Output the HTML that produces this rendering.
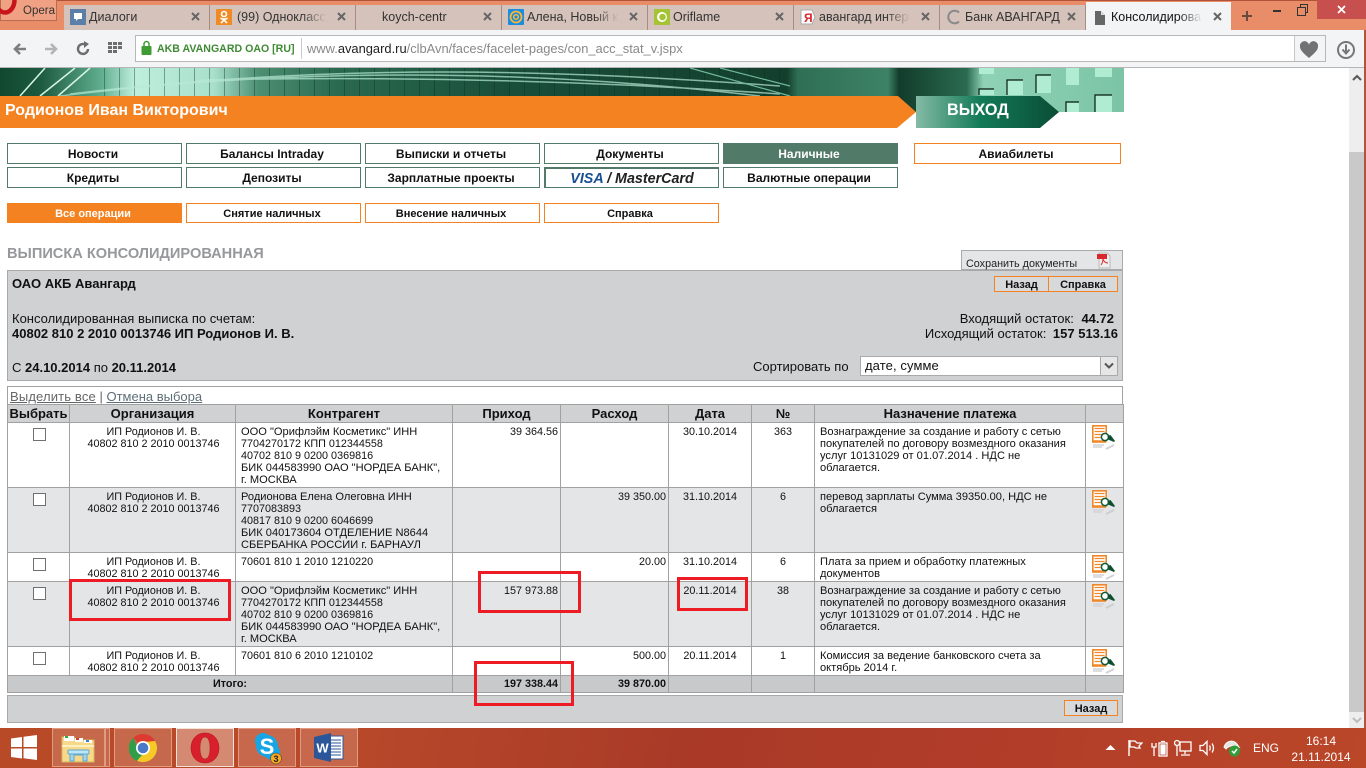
<!DOCTYPE html>
<html lang="ru"><head><meta charset="utf-8"><title>Консолидированная выписка</title>
<style>
html,body{margin:0;padding:0;width:1366px;height:768px;overflow:hidden;background:#fff;font-family:"Liberation Sans",Arial,sans-serif;color:#111}
.a{position:absolute;white-space:nowrap}
.tab{position:absolute;top:5px;height:25px;width:146px;background:#d5c2ba;border-right:1px solid #a98d82;box-sizing:border-box;font-size:12.5px;line-height:24px;color:#333;overflow:hidden}
.tab span.t{position:absolute;left:25px;top:0;white-space:nowrap}
.tab svg.fav{position:absolute;left:6px;top:4px}
.tab i{position:absolute;left:126px;top:6px;width:11px;height:11px;font-style:normal}
.tab i svg{display:block}
.fade{position:absolute;left:92px;top:0;width:54px;height:25px;background:linear-gradient(90deg,rgba(213,194,186,0),#d5c2ba 45%)}
.nav{position:absolute;box-sizing:border-box;width:175px;height:21px;border:1px solid #527a69;background:#fff;text-align:center;font-weight:bold;font-size:12px;line-height:21px;color:#111;padding-right:3px}
.nav.o{border-color:#f58220}
.sub{position:absolute;box-sizing:border-box;width:175px;height:20px;top:203px;border:1px solid #f58220;background:#fff;text-align:center;font-weight:bold;font-size:11px;line-height:20px;color:#111;padding-right:3px}
table{position:absolute;left:7px;top:404px;width:1116px;border-collapse:collapse;table-layout:fixed;font-size:10.8px;line-height:12px}
td,th{border:1px solid #a0a1a0;padding:3px 5px 0;vertical-align:top;box-sizing:border-box;overflow:hidden}
th{background:#d0d1d3;font-size:13px;line-height:15px;text-align:center;padding:0;vertical-align:middle;font-weight:bold}
tr.g td{background:#e4e5e7}
tr.w td{background:#fff}
tr.s td{background:#c8c9cb;font-weight:bold;padding-top:2px}
.c{text-align:center}.r{text-align:right;padding-right:2px}
td.r{padding-right:2px}
td.n{font-size:11.1px}
.l{font-size:11.1px}
.org{position:relative;left:1px;display:block}
.cb{display:block;width:13px;height:13px;border:1px solid #707070;background:#fff;box-sizing:border-box;margin:2px auto 0;position:relative;left:1px}
.ic{display:block;margin:0 0 0 1px}
td.i{padding:1px 0 0 5px}
.btn{position:absolute;box-sizing:border-box;border:1px solid #f58220;background:#d8d9da;text-align:center;font-weight:bold;font-size:11px;line-height:16px;color:#111}
.red{position:absolute;box-sizing:border-box;border:3px solid #ed1c24}
.tb{position:absolute;top:728px;height:39px;box-sizing:border-box;border:1px solid rgba(255,220,200,.45);background:rgba(255,230,215,.2)}
</style></head><body>

<!-- browser title / tab strip -->
<div class="a" style="left:0;top:0;width:1366px;height:30px;background:#e98c68"></div>
<div class="a" style="left:0;top:0;width:1366px;height:1px;background:#b0533a"></div>
<div class="a" style="left:0;top:0;width:57px;height:21px;background:#f0a184;border:1px solid #b96a4f;border-top:0;box-sizing:border-box"></div>
<svg class="a" style="left:0;top:0" width="20" height="17"><ellipse cx="5" cy="0" rx="9.500" ry="12.500" fill="none" stroke="#c8141c" stroke-width="4.500"/></svg>
<div class="a" style="left:23px;top:4px;font-size:11.500px;line-height:15px;color:#333">Opera</div>

<div class="tab" style="left:64px"><svg class="fav" width="16" height="16"><rect width="16" height="16" fill="#5b7fa8"/><path d="M4 4h8v6H8l-2 2v-2H4z" fill="#fff"/></svg><span class="t">Диалоги</span><i><svg width="11" height="11"><path d="M2 2l7 7M9 2l-7 7" stroke="#666" stroke-width="2"/></svg></i></div>
<div class="tab" style="left:210px"><svg class="fav" width="16" height="16"><rect width="16" height="16" rx="1" fill="#f08a24"/><circle cx="8" cy="5" r="2.500" fill="none" stroke="#fff" stroke-width="1.600"/><path d="M4.500 9.200q3.500 2 7 0M8 10.500v1M5 14l3-3 3 3" fill="none" stroke="#fff" stroke-width="1.600"/></svg><span class="t" style="left:27px">(99) Одноклассники</span><div class="fade"></div><i><svg width="11" height="11"><path d="M2 2l7 7M9 2l-7 7" stroke="#666" stroke-width="2"/></svg></i></div>
<div class="tab" style="left:356px"><span class="t" style="left:26px">koych-centr</span><i><svg width="11" height="11"><path d="M2 2l7 7M9 2l-7 7" stroke="#666" stroke-width="2"/></svg></i></div>
<div class="tab" style="left:502px"><svg class="fav" width="16" height="16"><rect width="16" height="16" rx="1" fill="#168de2"/><circle cx="8" cy="8" r="5.500" fill="none" stroke="#ffb52e" stroke-width="1.800"/><circle cx="8" cy="8" r="2.300" fill="none" stroke="#ffb52e" stroke-width="1.500"/></svg><span class="t">Алена, Новый кошелек</span><div class="fade"></div><i><svg width="11" height="11"><path d="M2 2l7 7M9 2l-7 7" stroke="#666" stroke-width="2"/></svg></i></div>
<div class="tab" style="left:648px"><svg class="fav" width="16" height="16"><rect width="16" height="16" fill="#a4c433"/><circle cx="8" cy="8" r="5" fill="#fff"/><circle cx="8.500" cy="8" r="3.300" fill="#a4c433"/></svg><span class="t">Oriflame</span><i><svg width="11" height="11"><path d="M2 2l7 7M9 2l-7 7" stroke="#666" stroke-width="2"/></svg></i></div>
<div class="tab" style="left:794px"><svg class="fav" width="16" height="16"><path d="M1 1h11l3 7-3 7H1z" fill="#fff" stroke="#aaa"/><text x="4" y="13" font-size="12" font-family="Liberation Sans" font-weight="bold" fill="#d8262c">Я</text></svg><span class="t">авангард интернет</span><div class="fade"></div><i><svg width="11" height="11"><path d="M2 2l7 7M9 2l-7 7" stroke="#666" stroke-width="2"/></svg></i></div>
<div class="tab" style="left:940px"><svg class="fav" width="16" height="16"><path d="M13 3.500A6.300 6.300 0 1 0 13 12.500" fill="none" stroke="#8a8a8a" stroke-width="2"/></svg><span class="t">Банк АВАНГАРД</span><i><svg width="11" height="11"><path d="M2 2l7 7M9 2l-7 7" stroke="#666" stroke-width="2"/></svg></i></div>
<div class="tab" style="left:1086px;width:145px;top:2px;height:29px;background:#f3f4f6;border:0;line-height:30px;color:#111"><svg class="fav" style="top:8px" width="16" height="16"><path d="M3 1h6l4 4v10H3z" fill="#666"/><path d="M9 1v4h4" fill="#ddd"/></svg><span class="t">Консолидированная</span><div class="fade" style="height:29px;background:linear-gradient(90deg,rgba(243,244,246,0),#f3f4f6 45%)"></div><i style="top:9px"><svg width="11" height="11"><path d="M2 2l7 7M9 2l-7 7" stroke="#666" stroke-width="2"/></svg></i></div>

<svg class="a" style="left:1240px;top:9px" width="14" height="14"><path d="M7 2v10M2 7h10" stroke="#6a4a3c" stroke-width="2"/></svg>
<div class="a" style="left:1273px;top:10px;width:8px;height:2px;background:#333"></div>
<svg class="a" style="left:1297px;top:4px" width="12" height="12"><path d="M3.500 3.500v-3h7v8h-2M.5 3.500h8v8h-8z" fill="none" stroke="#333"/></svg>
<div class="a" style="left:1317px;top:0;width:49px;height:19px;background:#c7504f"></div>
<svg class="a" style="left:1336px;top:4px" width="11" height="11"><path d="M2 2l7 7M9 2l-7 7" stroke="#fff" stroke-width="1.800"/></svg>

<!-- toolbar -->
<div class="a" style="left:0;top:30px;width:1366px;height:38px;background:#f3f4f6;border-bottom:1px solid #b5b5b5;box-sizing:border-box"></div>
<svg class="a" style="left:12px;top:41px" width="16" height="16"><path d="M14 8H4M8 3L3 8l5 5" fill="none" stroke="#7d7d7d" stroke-width="2.600"/></svg>
<svg class="a" style="left:43px;top:41px" width="16" height="16"><path d="M2 8h10M8 3l5 5-5 5" fill="none" stroke="#b4b4b4" stroke-width="2.600"/></svg>
<svg class="a" style="left:75px;top:41px" width="16" height="16"><path d="M13 8A5 5 0 1 1 10.500 3.600" fill="none" stroke="#6d6d6d" stroke-width="2.400"/><path d="M9 0l5 3-5 4z" fill="#6d6d6d"/></svg>
<svg class="a" style="left:108px;top:41px" width="15" height="15" fill="#6d6d6d"><rect x="0" y="1" width="4" height="3"/><rect x="5" y="1" width="4" height="3"/><rect x="10" y="1" width="4" height="3"/><rect x="0" y="5" width="4" height="3"/><rect x="5" y="5" width="4" height="3"/><rect x="10" y="5" width="4" height="3"/><rect x="0" y="9" width="4" height="3"/><rect x="5" y="9" width="4" height="3"/></svg>
<div class="a" style="left:135px;top:35px;width:1191px;height:27px;background:#fff;border:1px solid #b8b8b8;box-sizing:border-box"></div>
<div class="a" style="left:1294px;top:36px;width:31px;height:25px;background:#f3f4f6;border-left:1px solid #c8c8c8;box-sizing:border-box"></div>
<svg class="a" style="left:141px;top:40px" width="11" height="16"><rect x="0.500" y="6" width="10" height="9" rx="1" fill="#3f9b33"/><path d="M3 6V4a2.500 2.500 0 0 1 5 0v2" fill="none" stroke="#3f9b33" stroke-width="1.500"/></svg>
<div class="a" style="left:157px;top:42px;font-size:10.600px;line-height:15px;font-weight:bold;color:#3f8a34">AKB AVANGARD OAO [RU]</div>
<div class="a" style="left:301px;top:38px;width:1px;height:21px;background:#ccc"></div>
<div class="a" style="left:307px;top:41px;font-size:12.900px;line-height:16px;color:#888">www.<span style="color:#222">avangard.ru</span>/clbAvn/faces/facelet-pages/con_acc_stat_v.jspx</div>
<svg class="a" style="left:1299px;top:41px" width="20" height="18"><path d="M10 17C3 11 1 8.500 1 5.500A4.500 4.500 0 0 1 10 4a4.500 4.500 0 0 1 9 1.500C19 8.500 17 11 10 17z" fill="#727272"/></svg>
<svg class="a" style="left:1336px;top:40px" width="20" height="20"><circle cx="10" cy="10" r="8" fill="none" stroke="#777" stroke-width="2"/><path d="M10 4.500v8M6.500 9.500l3.500 4 3.500-4" fill="none" stroke="#777" stroke-width="2"/></svg>

<!-- header art -->
<svg class="a" style="left:0;top:68px" width="1124" height="44" viewBox="0 0 1124 44">
<defs>
<linearGradient id="hg" x1="0" x2="1" y1="0" y2="0">
<stop offset="0" stop-color="#10472f"/><stop offset=".036" stop-color="#1d5a40"/><stop offset=".09" stop-color="#5fae8e"/><stop offset=".12" stop-color="#bfeedd"/><stop offset=".19" stop-color="#a8e0cc"/><stop offset=".23" stop-color="#4d8f73"/><stop offset=".3" stop-color="#2a6a50"/><stop offset=".45" stop-color="#194f3a"/><stop offset=".7" stop-color="#133f2d"/><stop offset=".71" stop-color="#2f6f55"/><stop offset=".79" stop-color="#3d8266"/><stop offset=".8" stop-color="#123c2b"/><stop offset=".86" stop-color="#2a6b50"/><stop offset=".875" stop-color="#8fd2b6"/><stop offset="1" stop-color="#7cc4a6"/>
</linearGradient>
<pattern id="win" width="15" height="44" patternUnits="userSpaceOnUse"><rect x="14" width="1" height="44" fill="#0a2c1e" opacity=".4"/></pattern>
</defs>
<rect width="1124" height="44" fill="url(#hg)"/>
<rect x="100" width="690" height="28" fill="url(#win)"/>
<path d="M60 28Q400-14 760 28M70 26C340-6 560 2 780 18M200 12Q500 6 780 26" fill="none" stroke="#b8ead6" stroke-width="1.500" opacity=".7"/>
<path d="M40 28L75 0M58 28L90 0M20 28L45 0" stroke="#d6f5e8" stroke-width="1.500" fill="none"/>
<path d="M690 0l100 28M720 0l70 18" stroke="#6fb89b" stroke-width="1.200" fill="none"/>
<g fill="#b0ecd2"><rect x="979" y="0" width="15" height="6"/><rect x="979" y="21" width="15" height="6"/><rect x="1007" y="12" width="16" height="15"/><rect x="1036" y="7" width="15" height="18"/><rect x="1066" y="0" width="13" height="17"/><rect x="1095" y="0" width="17" height="9"/><rect x="1095" y="27" width="17" height="17"/><rect x="1066" y="34" width="13" height="10"/></g>
<path d="M979 27v-6h15M1007 27V12h16M1036 25V7h15M1095 44V27h17M1066 44V34h13" fill="none" stroke="#071a10" stroke-width="1.200"/>
</svg>
<svg class="a" style="left:0;top:96px" width="1124" height="32">
<defs><linearGradient id="ex" x1="0" x2="1" y1="0" y2="0"><stop offset="0" stop-color="#84bba5"/><stop offset=".45" stop-color="#137a58"/><stop offset="1" stop-color="#0a4d36"/></linearGradient></defs>
<path d="M895 32L916 16V32zM1040 32L1059 16L1070 16L1124 16V32z" fill="#fff"/>
<path d="M0 0H898L916 16L897 32H0z" fill="#f58220"/>
<path d="M916 0H1040L1059 16L1040 32H916z" fill="url(#ex)"/>
</svg>
<div class="a" style="left:5px;top:102px;font-size:16px;line-height:18px;font-weight:bold;color:#fff">Родионов Иван Викторович</div>
<div class="a" style="left:947px;top:100px;font-size:16.200px;line-height:21px;font-weight:bold;color:#fff">ВЫХОД</div>

<!-- nav -->
<div class="nav" style="left:7px;top:143px">Новости</div>
<div class="nav" style="left:186px;top:143px">Балансы Intraday</div>
<div class="nav" style="left:365px;top:143px">Выписки и отчеты</div>
<div class="nav" style="left:544px;top:143px">Документы</div>
<div class="nav" style="left:723px;top:143px;background:#527a69;color:#fff">Наличные</div>
<div class="nav o" style="left:914px;top:143px;width:207px">Авиабилеты</div>
<div class="nav" style="left:7px;top:167px">Кредиты</div>
<div class="nav" style="left:186px;top:167px">Депозиты</div>
<div class="nav" style="left:365px;top:167px">Зарплатные проекты</div>
<div class="nav" style="left:544px;top:167px;font-style:italic;font-size:14.300px;border-width:2px 1px 1px 2px;line-height:20px;color:#222;padding-right:0"><span style="color:#1a4f8f">VISA</span> / MasterCard</div>
<div class="nav" style="left:723px;top:167px">Валютные операции</div>

<div class="sub" style="left:7px;background:#f58220;color:#fff">Все операции</div>
<div class="sub" style="left:186px">Снятие наличных</div>
<div class="sub" style="left:365px">Внесение наличных</div>
<div class="sub" style="left:544px">Справка</div>

<div class="a" style="left:7px;top:246px;font-size:14.600px;line-height:16px;font-weight:bold;color:#97989b">ВЫПИСКА КОНСОЛИДИРОВАННАЯ</div>

<!-- save -->
<div class="a" style="left:961px;top:250px;width:162px;height:20px;background:#e4e5e6;border:1px solid #aaa;box-sizing:border-box"></div>
<div class="a" style="left:966px;top:258px;font-size:10.800px;line-height:13px;color:#222">Сохранить документы</div>
<svg class="a" style="left:1097px;top:252px" width="15" height="17"><path d="M2 1h8l3 3v12H2z" fill="#eee" stroke="#bbb"/><rect x="0" y="2" width="10" height="5" fill="#d8282c"/><path d="M4 13c2-3 2-5 2-6 1 3 3 4 5 4" fill="none" stroke="#d8282c"/></svg>

<!-- info panel -->
<div class="a" style="left:7px;top:270px;width:1116px;height:111px;background:#d0d1d3;border:1px solid #a8a9aa;box-sizing:border-box"></div>
<div class="a" style="left:12px;top:276px;font-size:13px;line-height:15px;font-weight:bold">ОАО АКБ Авангард</div>
<div class="a" style="left:12px;top:311px;font-size:13px;line-height:15px">Консолидированная выписка по счетам:</div>
<div class="a" style="left:12px;top:326px;font-size:13px;line-height:15px;font-weight:bold">40802 810 2 2010 0013746 ИП Родионов И. В.</div>
<div class="a" style="left:12px;top:360px;font-size:13px;line-height:15px">С <b>24.10.2014</b> по <b>20.11.2014</b></div>
<div class="btn" style="left:994px;top:276px;width:55px;height:16px">Назад</div>
<div class="btn" style="left:1048px;top:276px;width:70px;height:16px">Справка</div>
<div class="a" style="right:252px;top:311px;font-size:13px;line-height:15px">Входящий остаток:&nbsp;<b style="margin-left:4px">44.72</b></div>
<div class="a" style="right:248px;top:326px;font-size:13px;line-height:15px">Исходящий остаток:&nbsp;<b style="margin-left:3px">157 513.16</b></div>
<div class="a" style="left:753px;top:359px;font-size:13px;line-height:15px">Сортировать по</div>
<div class="a" style="left:860px;top:356px;width:258px;height:20px;background:#fff;border:1px solid #aaa;box-sizing:border-box;font-size:13px;line-height:18px;padding-left:4px;letter-spacing:.1px">дате, сумме</div>
<div class="a" style="left:1100px;top:357px;width:17px;height:18px;background:#e6e6e6;border-left:1px solid #aaa;box-sizing:border-box"></div>
<svg class="a" style="left:1104px;top:362px" width="10" height="8"><path d="M1 1.500l4 4 4-4" fill="none" stroke="#555" stroke-width="2"/></svg>

<!-- link row -->
<div class="a" style="left:7px;top:386px;width:1116px;height:19px;border:1px solid #a0a1a0;box-sizing:border-box;background:#fff"></div>
<div class="a" style="left:10px;top:389px;font-size:13px;line-height:15px;color:#666"><span style="text-decoration:underline;letter-spacing:.15px">Выделить все</span> | <span style="text-decoration:underline;color:#5e6f76">Отмена выбора</span></div>

<svg width="0" height="0" style="position:absolute"><defs>
<symbol id="doc" viewBox="0 0 24 26">
<path d="M.8 1.800h13.400v15.200H.8z" fill="#fff" stroke="#f0882a" stroke-width="1.600"/>
<path d="M2.500 4.500h10M2.500 7.500h10M2.500 10.500h8M2.500 13.500h6" stroke="#f0882a" stroke-width="1.300"/>
<path d="M0 18h14" stroke="#f0882a" stroke-width="1.600"/>
<path d="M1 21h11M1 23h9" stroke="#d6d6da" stroke-width="2" opacity=".8"/>
<path d="M14 25l8-4" stroke="#c8c8cc" stroke-width="2" opacity=".8"/>
<circle cx="13" cy="13" r="3.600" fill="#fff" stroke="#0f5c3a" stroke-width="1.500"/>
<path d="M15.500 12l3-1 4.500 6-1 1-6-2.500z" fill="#0f4f30"/>
</symbol></defs></svg>

<table>
<colgroup><col style="width:62px"><col style="width:166px"><col style="width:217px"><col style="width:108px"><col style="width:108px"><col style="width:83px"><col style="width:63px"><col style="width:271px"><col style="width:38px"></colgroup>
<tr style="height:18px"><th>Выбрать</th><th>Организация</th><th>Контрагент</th><th>Приход</th><th>Расход</th><th>Дата</th><th>№</th><th>Назначение платежа</th><th></th></tr>
<tr class="w" style="height:65px"><td><span class="cb"></span></td><td class="c"><span class="org">ИП Родионов И. В.<br>40802 810 2 2010 0013746</span></td><td><span class="l">ООО "Орифлэйм Косметикс" ИНН</span><br>7704270172 КПП 012344558<br>40702 810 9 0200 0369816<br><span class="l">БИК 044583990 ОАО "НОРДЕА БАНК",</span><br><span class="l">г. МОСКВА</span></td><td class="r">39 364.56</td><td class="r"></td><td class="c">30.10.2014</td><td class="c">363</td><td class="n">Вознаграждение за создание и работу с сетью<br>покупателей по договору возмездного оказания<br>услуг 10131029 от 01.07.2014 . НДС не<br>облагается.</td><td class="i"><svg class="ic" width="24" height="26"><use href="#doc"/></svg></td></tr>
<tr class="g" style="height:65px"><td><span class="cb"></span></td><td class="c"><span class="org">ИП Родионов И. В.<br>40802 810 2 2010 0013746</span></td><td><span class="l">Родионова Елена Олеговна ИНН</span><br>7707083893<br>40817 810 9 0200 6046699<br><span class="l">БИК 040173604 ОТДЕЛЕНИЕ N8644</span><br><span class="l">СБЕРБАНКА РОССИИ г. БАРНАУЛ</span></td><td class="r"></td><td class="r">39 350.00</td><td class="c">31.10.2014</td><td class="c">6</td><td class="n">перевод зарплаты Сумма 39350.00, НДС не<br>облагается</td><td class="i"><svg class="ic" width="24" height="26"><use href="#doc"/></svg></td></tr>
<tr class="w" style="height:29px"><td><span class="cb"></span></td><td class="c"><span class="org">ИП Родионов И. В.<br>40802 810 2 2010 0013746</span></td><td>70601 810 1 2010 1210220</td><td class="r"></td><td class="r">20.00</td><td class="c">31.10.2014</td><td class="c">6</td><td class="n">Плата за прием и обработку платежных<br>документов</td><td class="i"><svg class="ic" width="24" height="26"><use href="#doc"/></svg></td></tr>
<tr class="g" style="height:65px"><td><span class="cb"></span></td><td class="c"><span class="org">ИП Родионов И. В.<br>40802 810 2 2010 0013746</span></td><td><span class="l">ООО "Орифлэйм Косметикс" ИНН</span><br>7704270172 КПП 012344558<br>40702 810 9 0200 0369816<br><span class="l">БИК 044583990 ОАО "НОРДЕА БАНК",</span><br><span class="l">г. МОСКВА</span></td><td class="r">157 973.88</td><td class="r"></td><td class="c">20.11.2014</td><td class="c">38</td><td class="n">Вознаграждение за создание и работу с сетью<br>покупателей по договору возмездного оказания<br>услуг 10131029 от 01.07.2014 . НДС не<br>облагается.</td><td class="i"><svg class="ic" width="24" height="26"><use href="#doc"/></svg></td></tr>
<tr class="w" style="height:29px"><td><span class="cb"></span></td><td class="c"><span class="org">ИП Родионов И. В.<br>40802 810 2 2010 0013746</span></td><td>70601 810 6 2010 1210102</td><td class="r"></td><td class="r">500.00</td><td class="c">20.11.2014</td><td class="c">1</td><td class="n">Комиссия за ведение банковского счета за<br>октябрь 2014 г.</td><td class="i"><svg class="ic" width="24" height="26"><use href="#doc"/></svg></td></tr>
<tr class="s" style="height:17px"><td colspan="3" class="c">Итого:</td><td class="r">197 338.44</td><td class="r">39 870.00</td><td></td><td></td><td></td><td></td></tr>
</table>

<!-- footer panel -->
<div class="a" style="left:7px;top:695px;width:1116px;height:28px;background:#d0d1d3;border:1px solid #a8a9aa;box-sizing:border-box"></div>
<div class="btn" style="left:1064px;top:700px;width:54px;height:16px">Назад</div>

<!-- red annotation boxes -->
<div class="red" style="left:69px;top:579px;width:162px;height:42px"></div>
<div class="red" style="left:478px;top:571px;width:103px;height:42px"></div>
<div class="red" style="left:474px;top:661px;width:100px;height:45px"></div>
<div class="red" style="left:677px;top:577px;width:71px;height:34px"></div>

<!-- scrollbar -->
<div class="a" style="left:1349px;top:68px;width:15px;height:660px;background:#eeeeee"></div>
<div class="a" style="left:1349px;top:152px;width:15px;height:560px;background:#c9c9c9"></div>
<svg class="a" style="left:1352px;top:74px" width="10" height="8"><path d="M1 6l4-4 4 4" fill="none" stroke="#555" stroke-width="2"/></svg>
<svg class="a" style="left:1352px;top:716px" width="10" height="8"><path d="M1 2l4 4 4-4" fill="none" stroke="#bbb" stroke-width="2"/></svg>
<div class="a" style="left:1364px;top:30px;width:2px;height:698px;background:#b0553a"></div>

<!-- taskbar -->
<div class="a" style="left:0;top:728px;width:1366px;height:40px;background:linear-gradient(100deg,#b84a28 0%,#b9492a 25%,#a93a27 50%,#b03c29 70%,#bb4729 100%)"></div>
<svg class="a" style="left:10px;top:734px" width="28" height="27" fill="#fff"><path d="M1 4.500l11-1.500v10H1zM13.500 2.800L27 1v12H13.500zM1 14.500h11v10L1 23zM13.500 14.500H27V26l-13.500-1.800z"/></svg>
<div class="tb" style="left:52px;width:53px"></div><div class="tb" style="left:105px;width:5px"></div>
<div class="tb" style="left:114px;width:58px"></div>
<div class="tb" style="left:176px;width:58px;background:rgba(255,235,225,.4);border:1px solid #f2e2da"></div>
<div class="tb" style="left:238px;width:58px"></div>
<div class="tb" style="left:300px;width:58px"></div>
<svg class="a" style="left:60px;top:733px" width="36" height="30">
<path d="M2 4h12l3 3h17v22H2z" fill="#f7d98a" stroke="#d7b25f"/>
<rect x="4" y="3" width="10" height="5" fill="#fff"/><rect x="15" y="5" width="8" height="4" fill="#fff"/><rect x="24" y="7" width="8" height="3" fill="#fff"/>
<rect x="5" y="3" width="3" height="2" fill="#3da83d"/><rect x="16" y="5" width="3" height="2" fill="#d04040"/><rect x="26" y="7" width="3" height="2" fill="#3b7fd0"/>
<path d="M2 12h32v2H2z" fill="#fdf0c0"/>
<path d="M10 28v-7a3 3 0 0 1 3-3h11a3 3 0 0 1 3 3v7h-4v-6H14v6z" fill="#9fd4ee" stroke="#5fa8cf"/>
<rect x="8" y="17" width="21" height="4" rx="1" fill="#bfe6f7" stroke="#5fa8cf"/>
</svg>
<svg class="a" style="left:129px;top:734px" width="28" height="28" viewBox="-14 -14 28 28">
<path d="M0-14A14 14 0 0 1 12.100-7L4-2 0-6H-6L-9.500-10.300A14 14 0 0 1 0-14z" fill="#dd3b30"/>
<path d="M-9.500-10.300A14 14 0 0 0-6 13L0 6-6-1z" fill="#2f9e48"/>
<path d="M12.100-7A14 14 0 0 1-6 12.700L0 6 6-1 1-6z" fill="#f6c927"/>
<circle r="7" fill="#fff"/><circle r="5.300" fill="#4a79c9"/>
</svg>
<svg class="a" style="left:190px;top:732px" width="30" height="32" viewBox="0 0 30 32">
<path fill-rule="evenodd" d="M15 1C6.500 1 1 7.500 1 16s5.500 15 14 15 14-6.500 14-15S23.500 1 15 1zm0 4c3.500 0 5 5 5 11s-1.500 11-5 11-5-5-5-11 1.500-11 5-11z" fill="#d8202c" stroke="#a8141f" stroke-width=".5"/>
</svg>
<svg class="a" style="left:251px;top:732px" width="34" height="34">
<circle cx="12" cy="9" r="8" fill="#17a5e3"/><circle cx="21" cy="20" r="8" fill="#17a5e3"/><circle cx="16" cy="14" r="11" fill="#17a5e3"/>
<circle cx="25" cy="26.500" r="5.500" fill="#f7a81e" stroke="#333" stroke-width=".5"/>
<text x="16" y="22" text-anchor="middle" font-size="22" font-weight="bold" font-family="Liberation Sans" fill="#fff">S</text>
<text x="25" y="30" text-anchor="middle" font-size="9" font-weight="bold" font-family="Liberation Sans" fill="#222">3</text>
</svg>
<svg class="a" style="left:314px;top:733px" width="30" height="29">
<rect x="13" y="3" width="16" height="23" fill="#fff" stroke="#2b579a"/>
<path d="M16 7h11M16 10h11M16 13h11M16 16h11M16 19h11M16 22h11" stroke="#2b579a"/>
<path d="M0 4L17 0v29L0 25z" fill="#2b579a"/>
<text x="8.500" y="19.500" text-anchor="middle" font-size="13" font-weight="bold" font-family="Liberation Sans" fill="#fff">W</text>
</svg>

<!-- tray -->
<svg class="a" style="left:1105px;top:745px" width="11" height="6"><path d="M5.500 0l5 5H.5z" fill="#fff"/></svg>
<svg class="a" style="left:1127px;top:739px" width="16" height="18"><path d="M2 1v16" stroke="#fff" stroke-width="1.400"/><path d="M3 2h5l2 2h5l-3 3 1 2H9L7 8H3z" fill="none" stroke="#fff" stroke-width="1.300"/></svg>
<svg class="a" style="left:1151px;top:739px" width="17" height="18" fill="none" stroke="#fff" stroke-width="1.300"><rect x="8" y="4" width="8" height="13"/><rect x="10" y="6" width="4" height="9" fill="#fff"/><path d="M10 2.500h4M1 4v4h4V4M3 8v9" /></svg>
<svg class="a" style="left:1174px;top:739px" width="18" height="18" fill="none" stroke="#fff" stroke-width="1.300"><rect x="6" y="3" width="11" height="9"/><path d="M11 12v3M7 16h9M3 7v10"/><circle cx="3" cy="4" r="2.500" fill="#b9492a"/></svg>
<svg class="a" style="left:1199px;top:739px" width="17" height="18" fill="none" stroke="#fff" stroke-width="1.300"><path d="M1 6.500h3L8 2.500v13l-4-4H1z"/><path d="M10.500 6.500q1.500 2.500 0 5M13 4.500q3 4.500 0 9"/></svg>
<svg class="a" style="left:1223px;top:738px" width="18" height="20"><path d="M1 9C3 3 10 1 14 6l2 3c-4-2-10-2-13 2z" fill="#e8e4e0" stroke="#fff"/><circle cx="11.500" cy="13" r="5.500" fill="#2f9e3a"/><path d="M9 13l2 2 3-4" stroke="#fff" stroke-width="1.500" fill="none"/></svg>
<div class="a" style="left:1253px;top:741px;font-size:12px;line-height:15px;color:#fff">ENG</div>
<div class="a" style="left:1281px;width:80px;text-align:center;top:734px;font-size:12px;line-height:15px;color:#fff">16:14</div>
<div class="a" style="left:1281px;width:80px;text-align:center;top:750px;font-size:12px;line-height:15px;color:#fff">21.11.2014</div>
</body></html>
